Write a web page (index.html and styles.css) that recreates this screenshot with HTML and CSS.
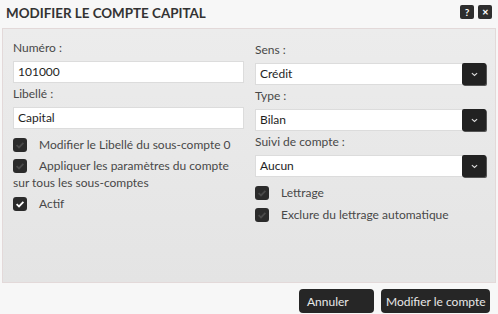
FILE: index.html
```html
<!DOCTYPE html>
<html lang="fr">
<head>
<meta charset="utf-8">
<title>Modifier le compte Capital</title>
<link rel="stylesheet" href="styles.css">
</head>
<body>
<div class="dialog">
  <div class="titlebar">
    <h1 class="title">MODIFIER LE COMPTE CAPITAL</h1>
    <div class="title-actions">
      <span class="tbtn">?</span>
      <span class="tbtn tbtn-close">&#x2715;</span>
    </div>
  </div>
  <div class="panel">
    <div class="col col-left">
      <div class="field">
        <label class="lbl">Numéro :</label>
        <div class="input">101000</div>
      </div>
      <div class="field">
        <label class="lbl">Libellé :</label>
        <div class="input">Capital</div>
      </div>
      <div class="checks">
        <div class="check"><span class="box"><svg viewBox="0 0 14 14"><path d="M3.6 7.2 L6 9.4 L10.4 4.8" /></svg></span>Modifier le Libellé du sous-compte 0</div>
        <div class="check"><span class="box"><svg viewBox="0 0 14 14"><path d="M3.6 7.2 L6 9.4 L10.4 4.8" /></svg></span>Appliquer les paramètres du compte sur tous les sous-comptes</div>
        <div class="check"><span class="box on"><svg viewBox="0 0 14 14"><path d="M3.6 7.2 L6 9.4 L10.4 4.8" /></svg></span>Actif</div>
      </div>
    </div>
    <div class="col col-right">
      <div class="field">
        <label class="lbl">Sens :</label>
        <div class="select"><span class="sval">Crédit</span><span class="sarrow"><svg viewBox="0 0 8 5"><path d="M1 1 L4 3.6 L7 1" /></svg></span></div>
      </div>
      <div class="field">
        <label class="lbl">Type :</label>
        <div class="select"><span class="sval">Bilan</span><span class="sarrow"><svg viewBox="0 0 8 5"><path d="M1 1 L4 3.6 L7 1" /></svg></span></div>
      </div>
      <div class="field">
        <label class="lbl">Suivi de compte :</label>
        <div class="select"><span class="sval">Aucun</span><span class="sarrow"><svg viewBox="0 0 8 5"><path d="M1 1 L4 3.6 L7 1" /></svg></span></div>
      </div>
      <div class="checks checks-right">
        <div class="check"><span class="box"><svg viewBox="0 0 14 14"><path d="M3.6 7.2 L6 9.4 L10.4 4.8" /></svg></span>Lettrage</div>
        <div class="check"><span class="box"><svg viewBox="0 0 14 14"><path d="M3.6 7.2 L6 9.4 L10.4 4.8" /></svg></span>Exclure du lettrage automatique</div>
      </div>
    </div>
  </div>
  <div class="footer">
    <button class="btn btn-cancel">Annuler</button>
    <button class="btn btn-ok">Modifier le compte</button>
  </div>
</div>
</body>
</html>
```
FILE: styles.css
```css
html, body {
  margin: 0;
  padding: 0;
  background: #f7f7f7;
}
body {
  font-family: Lato, "Liberation Sans", sans-serif;
  font-size: 12px;
  color: #3a3a3a;
}
.dialog {
  width: 498px;
  height: 314px;
  display: flex;
  flex-direction: column;
}
.titlebar {
  height: 28px;
  display: flex;
  align-items: flex-start;
  justify-content: space-between;
  padding: 0 6px 0 6px;
  box-sizing: border-box;
}
.title {
  margin: 4px 0 0 0;
  font-size: 13.4px;
  font-weight: 700;
  color: #333;
  line-height: 18px;
}
.title-actions {
  display: flex;
  gap: 4px;
  margin-top: 5px;
}
.tbtn {
  width: 14px;
  height: 14px;
  background: #2e2e2e;
  border-radius: 2px;
  color: #fff;
  font-size: 10px;
  font-weight: 700;
  line-height: 14px;
  text-align: center;
}
.tbtn-close { font-size: 8px; }
.panel {
  margin: 0 2px 0 2px;
  height: 255px;
  box-sizing: border-box;
  border: 1px solid #e3d9d9;
  background: linear-gradient(#ececec, #e4e4e4);
  display: flex;
  padding: 11px 9px 0 10px;
  gap: 11px;
}
.col {
  flex: 1;
  display: flex;
  flex-direction: column;
}
.col-right { padding-top: 2px; }
.field { margin-bottom: 3px; }
.lbl {
  display: block;
  line-height: 16px;
  margin-bottom: 5px;
  color: #484848;
}
.input, .select {
  height: 22px;
  box-sizing: border-box;
  background: #fff;
  border: 1px solid #dcdcdc;
  line-height: 20px;
  padding: 0 4px;
  color: #1e1e1e;
}
.select {
  display: flex;
  padding: 0 0 0 4px;
}
.sval { flex: 1; }
.sarrow {
  width: 24px;
  margin: -1px -1px -1px 0;
  background: #222;
  border-radius: 2px;
  box-shadow: 1px 1px 0 #555;
  display: flex;
  align-items: center;
  justify-content: center;
}
.sarrow svg {
  width: 7px;
  height: 5px;
  fill: none;
  stroke: #ddd;
  stroke-width: 1.3;
}
.checks { margin-top: 4px; }
.checks-right { margin-top: 4px; }
.check {
  line-height: 17px;
  margin-bottom: 4px;
  color: #484848;
}
.checks-right .check { margin-bottom: 5px; }
.box {
  display: inline-block;
  width: 14px;
  height: 14px;
  background: #2b2b2b;
  border-radius: 3px;
  vertical-align: -3px;
  margin-right: 12px;
}
.box svg {
  width: 14px;
  height: 14px;
  display: block;
  fill: none;
  stroke: #4a4a4a;
  stroke-width: 1.8;
}
.box.on svg { stroke: #fff; }
.footer {
  display: flex;
  justify-content: flex-end;
  gap: 7px;
  padding: 6px 8px 0 0;
}
.btn {
  height: 24px;
  background: #262626;
  border: 0;
  border-radius: 4px;
  color: #e8e8e8;
  font-family: Lato, "Liberation Sans", sans-serif;
  font-size: 12px;
  padding: 0 8px;
  text-align: left;
  white-space: nowrap;
}
.btn-cancel { width: 75px; }
.btn-ok { width: 109px; padding: 0 5px; text-align: center; }
```
